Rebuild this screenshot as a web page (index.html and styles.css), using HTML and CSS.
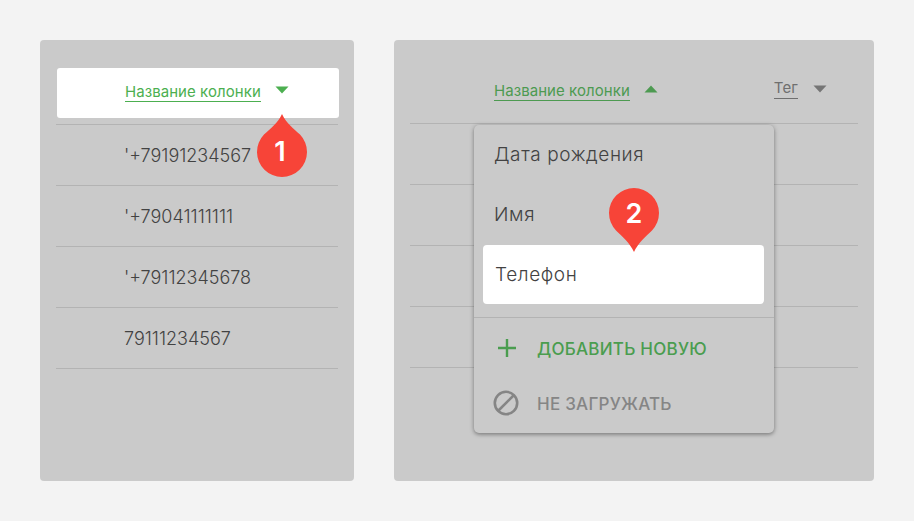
FILE: index.html
```html
<!DOCTYPE html>
<html lang="ru">
<head>
<meta charset="utf-8">
<title>Колонки</title>
<link rel="stylesheet" href="styles.css">
</head>
<body>
<main class="stage">
  <section class="panel panel-left">
    <div class="head-card">
      <span class="col-title green">Название колонки</span>
      <svg class="tri" width="14" height="8" viewBox="0 0 14 8"><path d="M0.5 0.5h13L7 7.5z" fill="#4caf50"/></svg>
    </div>
    <ul class="rows">
      <li class="row">'+79191234567</li>
      <li class="row">'+79041111111</li>
      <li class="row">'+79112345678</li>
      <li class="row">79111234567</li>
    </ul>
    <svg class="pin pin-1" width="50" height="63" viewBox="0 0 50 63"><path d="M25 0C29 9 37 15 43 20.6A25 25 0 1 1 7 20.6C13 15 21 9 25 0Z" fill="#f74438"/></svg>
    <span class="pin-num num-1">1</span>
  </section>

  <section class="panel panel-right">
    <div class="head-plain">
      <span class="col-title dimgreen">Название колонки</span>
      <svg class="tri tri-a" width="14" height="8" viewBox="0 0 14 8"><path d="M0.5 7.5h13L7 0.5z" fill="#4d9a51"/></svg>
      <span class="col-title tag">Тег</span>
      <svg class="tri tri-b" width="14" height="8" viewBox="0 0 14 8"><path d="M0.5 0.5h13L7 7.5z" fill="#757575"/></svg>
    </div>
    <ul class="rows rows-r">
      <li class="row"></li>
      <li class="row"></li>
      <li class="row"></li>
      <li class="row"></li>
    </ul>
    <div class="menu">
      <div class="opt">Дата рождения</div>
      <div class="opt">Имя</div>
      <div class="opt opt-on">Телефон</div>
      <div class="menu-sep"></div>
      <div class="act act-add">
        <svg width="22" height="22" viewBox="0 0 22 22"><path d="M11 2v18M2 11h18" stroke="#4a9d4f" stroke-width="2.4" fill="none"/></svg>
        <span class="act-label">ДОБАВИТЬ НОВУЮ</span>
      </div>
      <div class="act act-skip">
        <svg width="26" height="26" viewBox="0 0 26 26"><circle cx="13" cy="13" r="11.2" stroke="#858585" stroke-width="2.6" fill="none"/><path d="M21 5L5 21" stroke="#858585" stroke-width="2.6"/></svg>
        <span class="act-label">НЕ ЗАГРУЖАТЬ</span>
      </div>
    </div>
    <svg class="pin pin-2" width="50" height="64" viewBox="0 0 50 64"><path d="M25 64C21 55 13 48 7 42.4A25 25 0 1 1 43 42.4C37 48 29 55 25 64Z" fill="#f74438"/></svg>
    <span class="pin-num num-2">2</span>
  </section>
</main>
</body>
</html>
```

FILE: styles.css
```css
* { box-sizing: border-box; }
html, body { margin: 0; height: 100%; }
body {
  background: #f3f3f3;
  font-family: Inter, Roboto, sans-serif;
  color: #424242;
  overflow: hidden;
}
.stage {
  display: flex;
  gap: 40px;
  padding: 40px;
  height: 521px;
}
.panel {
  position: relative;
  height: 441px;
  background: #cacaca;
  border-radius: 4px;
}
.panel-left { width: 314px; padding: 28px 16px 0 16px; }
.panel-right { width: 480px; padding: 28px 16px 0 16px; }

.head-card {
  display: flex;
  align-items: center;
  width: 282px;
  height: 50px;
  margin-left: 1px;
  padding-left: 68px;
  background: #fff;
  border-radius: 3px;
}
.head-plain {
  display: flex;
  align-items: center;
  height: 50px;
  padding-left: 84px;
}
.col-title {
  font-size: 15px;
  line-height: 18px;
  letter-spacing: 0.06px;
  border-bottom: 1px solid currentColor;
  position: relative;
  top: -1px;
}
.green { color: #4caf50; }
.dimgreen { color: #4d9a51; top: -2px; }
.tag { color: #6f6f6f; margin-left: 116px; padding-bottom: 1px; top: -4px; }
.tri { margin-left: 14px; flex: none; position: relative; top: -3px; }
.tri-a { top: -4px; }
.tri-b { margin-left: 15px; top: -4px; }

.rows { list-style: none; margin: 6px 0 0; padding: 0; }
.rows-r { margin-top: 5px; }
.row {
  height: 61px;
  padding-left: 68px;
  border-top: 1px solid #b3b3b3;
  font-size: 18px;
  font-weight: 300;
  line-height: 61px;
  color: #424242;
}
.rows .row:last-child { height: 62px; border-bottom: 1px solid #b3b3b3; }

.menu {
  position: absolute;
  left: 80px;
  top: 85px;
  width: 300px;
  height: 308px;
  background: #cacaca;
  border-radius: 5px;
  box-shadow: 0 1px 5px rgba(0,0,0,.32), 0 2px 3px rgba(0,0,0,.12);
  display: flex;
  flex-direction: column;
  padding: 0 10px 0 9px;
}
.opt {
  height: 60px;
  flex: none;
  padding-left: 11px;
  font-size: 19px;
  font-weight: 300;
  line-height: 59px;
  letter-spacing: 0.6px;
  color: #424242;
}
.opt-on {
  height: 59px;
  padding-left: 12px;
  line-height: 59px;
  background: #fff;
  border-radius: 4px;
}
.menu-sep {
  height: 1px;
  margin: 13px -10px 0 -9px;
  background: #b3b3b3;
  flex: none;
}
.act {
  display: flex;
  align-items: center;
  font-size: 17px;
  font-weight: 500;
  letter-spacing: 0.25px;
  flex: none;
}
.act-label { padding-top: 2px; }
.act-add { height: 60px; padding-left: 13px; gap: 19px; color: #4a9d4f; }
.act-skip { height: 50px; padding-left: 10px; gap: 18px; color: #858585; }

.pin { position: absolute; }
.pin-1 { left: 217px; top: 74px; }
.pin-2 { left: 215px; top: 148px; }
.pin-num {
  position: absolute;
  color: #fff;
  font-weight: 600;
  font-size: 27px;
  line-height: 30px;
  width: 50px;
  text-align: center;
}
.num-1 { left: 215px; top: 97px; }
.num-2 { left: 215px; top: 159px; }
```
